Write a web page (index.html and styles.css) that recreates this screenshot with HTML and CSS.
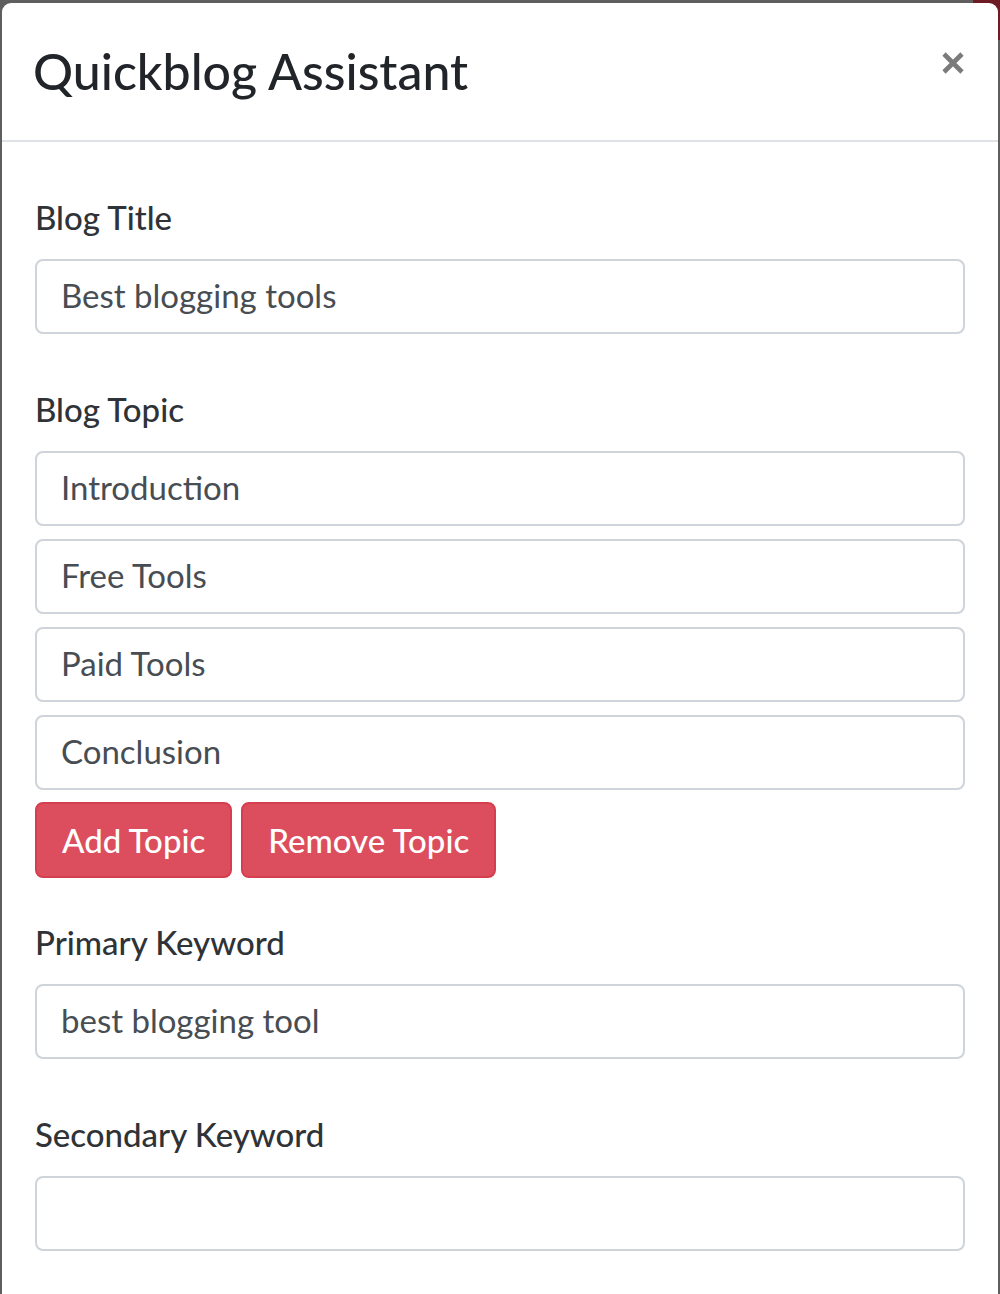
FILE: index.html
```html
<!DOCTYPE html>
<html lang="en">
<head>
<meta charset="utf-8">
<title>Quickblog Assistant</title>
<link rel="stylesheet" href="styles.css">
</head>
<body>
<div class="backdrop-accent"></div>
<div class="modal">
  <div class="modal-header">
    <h3 class="modal-title">Quickblog Assistant</h3>
    <button class="close" type="button" aria-label="Close">
      <svg width="24" height="24" viewBox="0 0 24 24"><path d="M3 3 L21 21 M21 3 L3 21" stroke="#7b7b7b" stroke-width="4.6" stroke-linecap="butt"/></svg>
    </button>
  </div>
  <div class="modal-body">
    <div class="form-group">
      <label class="label">Blog Title</label>
      <div class="input">Best blogging tools</div>
    </div>
    <div class="form-group">
      <label class="label">Blog Topic</label>
      <div class="topics">
        <div class="input">Introduction</div>
        <div class="input">Free Tools</div>
        <div class="input">Paid Tools</div>
        <div class="input">Conclusion</div>
        <div class="btn-row">
          <button class="btn" type="button">Add Topic</button>
          <button class="btn" type="button">Remove Topic</button>
        </div>
      </div>
    </div>
    <div class="form-group after-buttons">
      <label class="label">Primary Keyword</label>
      <div class="input">best blogging tool</div>
    </div>
    <div class="form-group">
      <label class="label">Secondary Keyword</label>
      <div class="input"></div>
    </div>
  </div>
</div>
</body>
</html>
```
FILE: styles.css
```css
html, body {
  margin: 0;
  padding: 0;
}
body {
  background: #5f5f5f;
  font-family: "Lato", "Noto Sans", sans-serif;
  width: 1000px;
  height: 1294px;
  overflow: hidden;
  position: relative;
}
.backdrop-accent {
  position: absolute;
  top: 0;
  right: 0;
  width: 27px;
  height: 40px;
  background: #6e1b26;
}
.modal {
  position: relative;
  margin: 3px 2px 0 2px;
  background: #fff;
  border-radius: 9px 9px 0 0;
  height: 1291px;
}
.modal-header {
  height: 137px;
  border-bottom: 2px solid #dee2e6;
  display: flex;
  align-items: center;
  justify-content: space-between;
  padding: 0 33px 0 31px;
}
.modal-title {
  margin: 0;
  font-size: 50px;
  font-weight: 500;
  color: #212529;
  line-height: 1.2;
  padding-bottom: 2px;
}
.close {
  border: 0;
  background: none;
  padding: 0;
  margin: 0 0 18px 0;
  width: 24px;
  height: 24px;
  display: flex;
}
.modal-body {
  padding: 51px 33px 0 33px;
  display: flex;
  flex-direction: column;
  gap: 51px;
}
.form-group {
  display: flex;
  flex-direction: column;
}
.form-group.after-buttons {
  margin-top: -11px;
}
.label {
  font-size: 33px;
  line-height: 48px;
  color: #2f3337;
  margin-bottom: 18px;
  font-weight: 500;
}
.input {
  box-sizing: border-box;
  height: 75px;
  border: 2px solid #ced4da;
  border-radius: 8px;
  padding: 0 24px;
  font-size: 33px;
  line-height: 69px;
  color: #474d53;
  background: #fff;
}
.topics {
  display: flex;
  flex-direction: column;
  gap: 13px;
}
.btn-row {
  display: flex;
  gap: 9px;
  margin-top: -1px;
}
.btn {
  box-sizing: border-box;
  height: 76px;
  padding: 0 25px;
  border: 2px solid #d43e4e;
  border-radius: 8px;
  background: #dc4d5e;
  color: #fff;
  font-family: inherit;
  font-size: 33px;
  font-weight: 500;
  line-height: 70px;
}
```
